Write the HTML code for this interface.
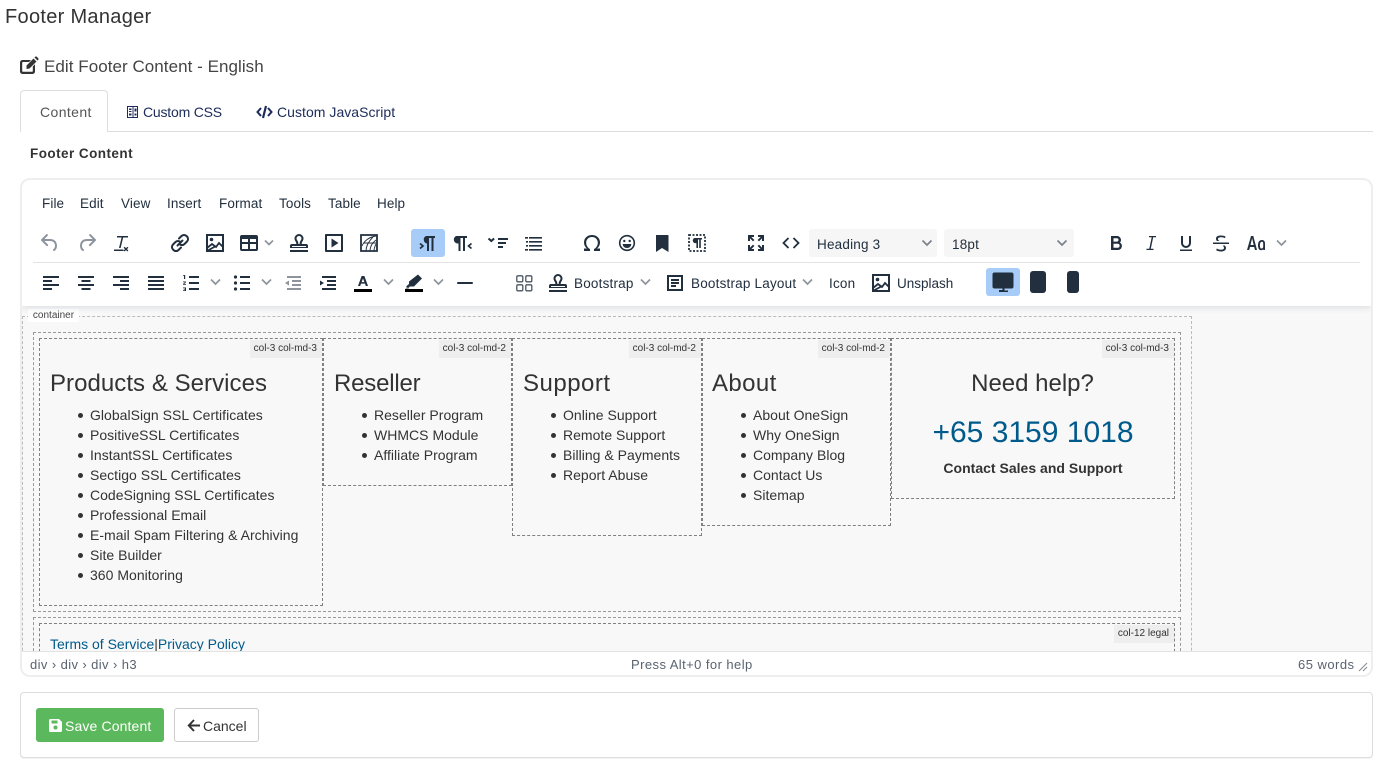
<!DOCTYPE html>
<html><head><meta charset="utf-8"><style>
html,body{margin:0;padding:0;background:#fff}
body{width:1388px;height:778px;position:relative;overflow:hidden;font-family:"Liberation Sans",sans-serif;color:#333}
.t{position:absolute;white-space:nowrap;line-height:20px}
.m{font-size:13.5px;color:#222f3e;letter-spacing:.1px}
.g{font-size:13.5px;color:#222f3e;letter-spacing:.2px}
svg{position:absolute;overflow:visible}
.i{fill:#222f3e}
.off{fill:#8d949d}
.box{position:absolute;box-sizing:border-box;border:1px dashed #999}
.c{border-color:#808080}
.lb{position:absolute;top:1px;right:0;height:18px;line-height:18px;background:#eee;font-size:10px;padding:0 5px 0 4px;color:#333;white-space:nowrap}
.h{position:absolute;font-size:24px;line-height:28px;color:#333;white-space:nowrap}
ul{position:absolute;margin:0;padding:0;list-style:none;font-size:14px;line-height:20px;color:#333;white-space:nowrap;letter-spacing:.02px}
li{position:relative;padding-left:0}
li:before{content:"";position:absolute;left:-12px;top:8px;width:5px;height:5px;border-radius:50%;background:#333}
</style></head><body>

<div class="t" style="left:5px;top:7px;font-size:20px;color:#333;letter-spacing:.3px">Footer Manager</div>

<svg style="left:20px;top:56px" width="20" height="18" viewBox="0 0 20 18"><path fill="#333" d="M2.500 4H11L9 6H3a.8.8 0 0 0-.8.8V15a.8.8 0 0 0 .8.8h9a.8.8 0 0 0 .8-.8V10.500l2.200-2.200V15.500a2.500 2.500 0 0 1-2.500 2.500h-10A2.500 2.500 0 0 1 0 15.500v-9A2.500 2.500 0 0 1 2.500 4z"/><path fill="#333" d="M6.500 9.500 13.500 2.500l3 3L9.500 12.500l-3 .5zM14.500 1.500l1-1h1l2 2v1l-1 1z"/></svg>
<div class="t" style="left:44px;top:57px;font-size:17px;color:#444;letter-spacing:.05px">Edit Footer Content - English</div>

<div style="position:absolute;left:20px;top:131px;width:1353px;height:1px;background:#ddd"></div>
<div style="position:absolute;left:20px;top:90px;width:88px;height:42px;box-sizing:border-box;border:1px solid #ddd;border-bottom:0;border-radius:4px 4px 0 0;background:#fff"></div>
<div class="t" style="left:40px;top:102px;font-size:14px;color:#555;letter-spacing:.4px">Content</div>
<svg style="left:127px;top:106px" width="12" height="12" viewBox="0 0 12 12"><rect x=".5" y=".5" width="10" height="11" fill="none" stroke="#1c2b5a"/><rect x="5.500" y="0" width="1" height="12" fill="#1c2b5a"/><rect x="2" y="2.500" width="2.500" height="1.500" fill="#1c2b5a"/><rect x="2" y="5" width="2.500" height="1" fill="#1c2b5a"/><rect x="7.500" y="2.500" width="2" height="3" fill="#1c2b5a"/><rect x="2" y="7.500" width="2.500" height="2" fill="#1c2b5a"/><rect x="7.500" y="7.500" width="2" height="2" fill="#1c2b5a"/></svg>
<div class="t" style="left:143px;top:102px;font-size:14px;color:#1c2b5a;letter-spacing:-.2px">Custom CSS</div>
<svg style="left:256px;top:105px" width="17" height="14" viewBox="0 0 17 14"><path fill="none" stroke="#1c2b5a" stroke-width="2" d="M5 3 1.500 7 5 11M12 3l3.500 4L12 11"/><path fill="none" stroke="#1c2b5a" stroke-width="2.200" d="M10 1 7 13"/></svg>
<div class="t" style="left:277px;top:102px;font-size:14px;color:#1c2b5a;letter-spacing:.04px">Custom JavaScript</div>

<div class="t" style="left:30px;top:144px;font-size:13.5px;font-weight:700;color:#333;letter-spacing:.45px">Footer Content</div>

<!-- editor -->
<div style="position:absolute;left:20px;top:178px;width:1353px;height:499px;box-sizing:border-box;border:2px solid #eee;border-radius:10px;background:#fff;overflow:hidden">
  <div style="position:absolute;left:0;top:126px;width:1349px;height:345px;background:#f8f8f8;overflow:hidden">
    <div class="box" style="left:0;top:10px;width:1170px;height:400px;border-color:#bbb"></div>
    <div style="position:absolute;left:6px;top:3px;width:51px;height:13px;background:#fff;font-size:10px;line-height:13px;text-align:center;color:#444">container</div>

    <div class="box" style="left:11px;top:26px;width:1148px;height:280px"></div>

    <div class="box c" style="left:17px;top:32px;width:284px;height:268px"><div class="lb">col-3 col-md-3</div>
      <div class="h" style="left:10px;top:31px;letter-spacing:.05px">Products &amp; Services</div>
      <ul style="left:50px;top:66px"><li>GlobalSign SSL Certificates</li><li>PositiveSSL Certificates</li><li>InstantSSL Certificates</li><li>Sectigo SSL Certificates</li><li>CodeSigning SSL Certificates</li><li>Professional Email</li><li>E-mail Spam Filtering &amp; Archiving</li><li>Site Builder</li><li>360 Monitoring</li></ul>
    </div>
    <div class="box c" style="left:301px;top:32px;width:189px;height:148px"><div class="lb">col-3 col-md-2</div>
      <div class="h" style="left:10px;top:31px;letter-spacing:-.2px">Reseller</div>
      <ul style="left:50px;top:66px"><li>Reseller Program</li><li>WHMCS Module</li><li>Affiliate Program</li></ul>
    </div>
    <div class="box c" style="left:490px;top:32px;width:190px;height:198px"><div class="lb">col-3 col-md-2</div>
      <div class="h" style="left:10px;top:31px;letter-spacing:.5px">Support</div>
      <ul style="left:50px;top:66px"><li>Online Support</li><li>Remote Support</li><li>Billing &amp; Payments</li><li>Report Abuse</li></ul>
    </div>
    <div class="box c" style="left:680px;top:32px;width:189px;height:188px"><div class="lb">col-3 col-md-2</div>
      <div class="h" style="left:9px;top:31px;letter-spacing:.4px">About</div>
      <ul style="left:50px;top:66px"><li>About OneSign</li><li>Why OneSign</li><li>Company Blog</li><li>Contact Us</li><li>Sitemap</li></ul>
    </div>
    <div class="box c" style="left:869px;top:32px;width:284px;height:161px"><div class="lb">col-3 col-md-3</div>
      <div class="h" style="left:-1px;width:283px;text-align:center;top:31px">Need help?</div>
      <div style="position:absolute;left:0;width:282px;top:76px;text-align:center;font-size:30px;line-height:36px;color:#005a8c">+65 3159 1018</div>
      <div style="position:absolute;left:0;width:282px;top:119px;text-align:center;font-size:14px;line-height:20px;font-weight:700;color:#333;letter-spacing:.01px">Contact Sales and Support</div>
    </div>

    <div class="box" style="left:11px;top:311px;width:1148px;height:60px"></div>
    <div class="box c" style="left:17px;top:317px;width:1136px;height:60px"><div class="lb">col-12 legal</div>
      <div style="position:absolute;left:10px;top:10px;font-size:14px;line-height:20px;white-space:nowrap;color:#005a8c">Terms of Service<span style="color:#333">|</span>Privacy Policy</div>
    </div>
  </div>
  <div style="position:absolute;left:0;top:0;width:1349px;height:126px;background:#fff;box-shadow:0 2px 6px rgba(34,47,62,.12)"></div>
  <div style="position:absolute;left:11px;top:82px;width:1327px;height:1px;background:#e3e3e3"></div>
  <div style="position:absolute;left:0;top:471px;width:1349px;height:24px;background:#fff;border-top:1px solid #e3e3e3;box-sizing:border-box"></div>
</div>

<!-- menu -->
<div class="t m" style="left:42px;top:194px">File</div>
<div class="t m" style="left:80px;top:194px">Edit</div>
<div class="t m" style="left:121px;top:194px">View</div>
<div class="t m" style="left:167px;top:194px">Insert</div>
<div class="t m" style="left:219px;top:194px">Format</div>
<div class="t m" style="left:279px;top:194px">Tools</div>
<div class="t m" style="left:328px;top:194px">Table</div>
<div class="t m" style="left:377px;top:194px">Help</div>

<!-- highlights -->
<div style="position:absolute;left:411px;top:229px;width:34px;height:28px;background:#a6ccf7;border-radius:3px"></div>
<div style="position:absolute;left:986px;top:268px;width:34px;height:28px;background:#a6ccf7;border-radius:3px"></div>
<div style="position:absolute;left:809px;top:229px;width:128px;height:28px;background:#f6f6f6;border-radius:3px"></div>
<div style="position:absolute;left:944px;top:229px;width:130px;height:28px;background:#f6f6f6;border-radius:3px"></div>
<div class="t g" style="left:817px;top:235px">Heading 3</div>
<div class="t g" style="left:952px;top:235px">18pt</div>

<!-- row 1 icons: each svg 24x24 -->
<svg style="left:38px;top:231px" width="24" height="24" viewBox="0 0 24 24"><path class="off" d="M6.400 8H12c3.700 0 6.200 2 6.800 5.100.6 2.700-.4 5.600-2.300 6.800a1 1 0 0 1-1-1.800c1.100-.6 1.800-2.700 1.400-4.600-.5-2.100-2.100-3.500-4.900-3.500H6.400l3.300 3.300a1 1 0 1 1-1.400 1.400l-5-5a1 1 0 0 1 0-1.400l5-5a1 1 0 0 1 1.400 1.400L6.400 8z"/></svg>
<svg style="left:75px;top:231px" width="24" height="24" viewBox="0 0 24 24"><path class="off" d="M17.600 8H12c-3.700 0-6.200 2-6.800 5.100-.6 2.700.4 5.600 2.300 6.800a1 1 0 0 0 1-1.800c-1.100-.6-1.800-2.700-1.400-4.600.5-2.100 2.100-3.500 4.900-3.500h5.600l-3.300 3.300a1 1 0 1 0 1.400 1.400l5-5a1 1 0 0 0 0-1.400l-5-5a1 1 0 0 0-1.400 1.400L17.600 8z"/></svg>
<svg style="left:109px;top:231px" width="24" height="24" viewBox="0 0 24 24"><path class="i" d="M8 5h11v1.500h-4.800L11.600 17H10L12.600 6.500H8zM5 18.500h9.500v1.500H5zM15.600 15.700l1.400 1.400 1.400-1.400 1 1-1.400 1.400 1.400 1.400-1 1-1.400-1.400-1.400 1.400-1-1 1.400-1.400-1.400-1.400z"/></svg>
<svg style="left:168px;top:231px" width="24" height="24" viewBox="0 0 24 24"><path fill="none" stroke="#222f3e" stroke-width="2" stroke-linecap="round" d="M11 7.500 13.500 5a3.500 3.500 0 0 1 5 0l.5.500a3.500 3.500 0 0 1 0 5L16.500 13a3.500 3.500 0 0 1-5 0M13 16.500 10.500 19a3.500 3.500 0 0 1-5 0L5 18.500a3.500 3.500 0 0 1 0-5L7.500 11a3.500 3.500 0 0 1 5 0M9.500 14.500l5-5"/></svg>
<svg style="left:203px;top:231px" width="24" height="24" viewBox="0 0 24 24"><rect x="4" y="4" width="16" height="16" fill="none" stroke="#222f3e" stroke-width="2"/><circle cx="8.500" cy="8.500" r="1.800" class="i"/><path fill="none" stroke="#222f3e" stroke-width="1.800" d="M4 17l5-4 4 3 3-4 4 4M4 20l9-5"/></svg>
<svg style="left:237px;top:231px" width="24" height="24" viewBox="0 0 24 24"><path class="i" fill-rule="evenodd" d="M5 4h14a2 2 0 0 1 2 2v12a2 2 0 0 1-2 2H5a2 2 0 0 1-2-2V6a2 2 0 0 1 2-2zm0 9v5h6v-5zm8 0v5h6v-5zm0-2h6V8h-6zm-8 0h6V8H5z"/></svg>
<svg style="left:264px;top:239px" width="10" height="8" viewBox="0 0 10 8"><path d="M1 1.500 5 5.500 9 1.500" fill="none" stroke="#8d949d" stroke-width="1.700"/></svg>
<svg style="left:287px;top:231px" width="24" height="24" viewBox="0 0 24 24"><path fill-rule="evenodd" class="i" d="M12 3a4.500 4.500 0 0 1 4.500 4.500c0 1.700-1 2.700-1.500 3.700-.3.600-.4 1.200-.3 1.800H19a2 2 0 0 1 2 2v2H3v-2a2 2 0 0 1 2-2h4.300c.1-.6 0-1.200-.3-1.800-.5-1-1.500-2-1.500-3.700A4.500 4.500 0 0 1 12 3zm0 2a2.500 2.500 0 0 0-2.500 2.500c0 1.100.8 1.800 1.300 2.800.4.800.6 1.700.5 2.700h1.400c-.1-1 .1-1.900.5-2.700.5-1 1.300-1.700 1.300-2.800A2.500 2.500 0 0 0 12 5zM3 19h18v2H3z"/><rect x="5" y="15" width="14" height="1" fill="#fff"/></svg>
<svg style="left:322px;top:231px" width="24" height="24" viewBox="0 0 24 24"><path class="i" fill-rule="evenodd" d="M4 3h16a1 1 0 0 1 1 1v16a1 1 0 0 1-1 1H4a1 1 0 0 1-1-1V4a1 1 0 0 1 1-1zm1 2v14h14V5zm4.500 2.500 7 4.500-7 4.500z"/></svg>
<svg style="left:357px;top:231px" width="24" height="24" viewBox="0 0 24 24"><path fill="none" stroke="#222f3e" stroke-width="1.800" d="M4 4h16v16H4z"/><path fill="none" stroke="#222f3e" stroke-width=".9" d="M5 15c2-5 7-9 14-10M9 20c0-5 3-10 7-14M13 20c0-4 2-8 6-11M17 20c0-3 1-5 2-7M7 12h12"/></svg>
<svg style="left:416px;top:231px" width="24" height="24" viewBox="0 0 24 24"><path class="i" d="M10 5h9v2h-1.500v13h-2V7H13v13h-2v-7.500a4 4 0 0 1-1-7.500z"/><path d="M4 12.500l3 2.500-3 2.500" fill="none" stroke="#222f3e" stroke-width="1.700"/></svg>
<svg style="left:451px;top:231px" width="24" height="24" viewBox="0 0 24 24"><path class="i" d="M5 5h11v2h-2v13h-2V7H9.500v13h-2v-7.500A4 4 0 0 1 5 5z"/><path d="M20.500 12.500l-3 2.500 3 2.500" fill="none" stroke="#222f3e" stroke-width="1.700"/></svg>
<svg style="left:486px;top:231px" width="24" height="24" viewBox="0 0 24 24"><path class="i" d="M12 7h10v2H12zM12 11h8v2h-8zM12 15h5v2h-5z"/><path d="M2.500 7.500l2.800 2.500 2.800-2.500" fill="none" stroke="#222f3e" stroke-width="2"/></svg>
<svg style="left:521px;top:231px" width="24" height="24" viewBox="0 0 24 24"><path class="i" d="M8 6h13v1.600H8zM8 10h13v1.600H8zM8 14h13v1.600H8zM8 18h13v1.600H8zM4 6h3v1.600H4zM5 10h2v1.600H5zM5 14h2v1.600H5zM4 18h3v1.600H4z"/></svg>
<svg style="left:580px;top:231px" width="24" height="24" viewBox="0 0 24 24"><path class="i" d="M12 4c4.500 0 8 3 8 7.500 0 2.500-1.200 4.600-3 6h3V20h-6v-2c2-1 3.800-3.300 3.800-6.300C17.800 8.400 15.300 6 12 6s-5.800 2.400-5.800 5.700c0 3 1.800 5.300 3.800 6.300v2H4v-2.500h3c-1.800-1.400-3-3.500-3-6C4 7 7.500 4 12 4z"/></svg>
<svg style="left:615px;top:231px" width="24" height="24" viewBox="0 0 24 24"><circle cx="12" cy="12" r="7.300" fill="none" stroke="#222f3e" stroke-width="1.600"/><circle cx="9.300" cy="10" r="1.200" class="i"/><circle cx="14.700" cy="10" r="1.200" class="i"/><path class="i" d="M7.700 13h8.600c0 2.400-1.900 4-4.300 4s-4.300-1.600-4.300-4z"/></svg>
<svg style="left:650px;top:231px" width="24" height="24" viewBox="0 0 24 24"><path class="i" d="M6 4h12a.5.500 0 0 1 .5.500V21L12 17l-6 4V4z"/></svg>
<svg style="left:685px;top:231px" width="24" height="24" viewBox="0 0 24 24"><path class="i" d="M9.500 7H17v1.500h-1.200V17h-1.600V8.500H13V17h-1.600v-5a2.600 2.600 0 0 1-1.900-5z"/><rect x="4" y="4" width="16" height="16" fill="none" stroke="#222f3e" stroke-width="1.800" stroke-dasharray="2 1.500"/></svg>
<svg style="left:744px;top:231px" width="24" height="24" viewBox="0 0 24 24"><path class="i" d="M4 4h6v2H7.400l3 3L9 10.400l-3-3V10H4zM14 4h6v6h-2V7.400l-3 3L13.600 9l3-3H14zM9 13.600l1.400 1.400-3 3H10v2H4v-6h2v2.600zM15 13.600l3 3V14h2v6h-6v-2h2.600l-3-3z"/></svg>
<svg style="left:779px;top:231px" width="24" height="24" viewBox="0 0 24 24"><path fill="none" stroke="#222f3e" stroke-width="1.800" d="M9.500 7 4.500 12l5 5M14.500 7l5 5-5 5"/></svg>
<svg style="left:921px;top:239px" width="12" height="8" viewBox="0 0 12 8"><path d="M1.500 1.500 6 6l4.500-4.500" fill="none" stroke="#7a828c" stroke-width="1.700"/></svg>
<svg style="left:1056px;top:239px" width="12" height="8" viewBox="0 0 12 8"><path d="M1.500 1.500 6 6l4.500-4.500" fill="none" stroke="#7a828c" stroke-width="1.700"/></svg>
<svg style="left:1104px;top:231px" width="24" height="24" viewBox="0 0 24 24"><path fill-rule="evenodd" class="i" d="M7 5h6a4 4 0 0 1 3 6.600A4 4 0 0 1 14 19H7zm2.500 2.200v3.400h3.300a1.700 1.700 0 0 0 0-3.400zm0 5.600v4h4.100a2 2 0 0 0 0-4z"/></svg>
<svg style="left:1139px;top:231px" width="24" height="24" viewBox="0 0 24 24"><path class="i" d="M10 5h7v1.200h-2.800L11.800 17.800H14.500V19H7.500v-1.200h2.800L12.700 6.200H10z"/></svg>
<svg style="left:1174px;top:231px" width="24" height="24" viewBox="0 0 24 24"><path class="i" d="M7 5h2v7a3 3 0 0 0 6 0V5h2v7a5 5 0 0 1-10 0zM6 18.500h12V20H6z"/></svg>
<svg style="left:1209px;top:231px" width="24" height="24" viewBox="0 0 24 24"><path class="i" d="M4 11.500h16V13H4zM8 10c-.7-.7-1-1.500-1-2.500C7 5.500 9 4.500 12 4.500c1.800 0 3.500.4 4.500 1l-.5 1.700c-1-.6-2.500-.9-4-.9-1.800 0-3 .5-3 1.700 0 .9.600 1.500 1.400 2zM15.800 14.500c.8 1 1.200 1.500 1.200 2.500 0 2.300-2.200 3.500-5 3.500-1.900 0-3.700-.5-4.800-1.200l.6-1.800c1.100.7 2.700 1.200 4.200 1.200 1.800 0 3-.6 3-1.700 0-.9-.4-1.500-1.300-2.500z"/></svg>
<svg style="left:1244px;top:231px" width="24" height="24" viewBox="0 0 24 24"><path fill-rule="evenodd" class="i" d="M7 5h2.300L13 19h-2l-.8-3H6l-.8 3H3zm1.100 2.200L6.500 14h3.200zM18 9c1.800 0 3 1.300 3 3.500V19h-1.800v-.9c-.5.700-1.200 1.100-2.200 1.100-2 0-3-2-3-5s1.200-5.200 4-5.200zm.2 1.700c-1.500 0-2.300 1.300-2.300 3.500s.5 3.300 1.600 3.300c1 0 1.700-.7 1.700-2v-3c0-1.100-.3-1.800-1-1.800z"/></svg>
<svg style="left:1276px;top:239px" width="11" height="8" viewBox="0 0 11 8"><path d="M1 1.500 5.500 6 10 1.500" fill="none" stroke="#8d949d" stroke-width="1.700"/></svg>

<!-- row 2 icons -->
<svg style="left:39px;top:271px" width="24" height="24" viewBox="0 0 24 24"><path class="i" d="M4 5h16v2H4zM4 9h9v2H4zM4 13h16v2H4zM4 17h9v2H4z"/></svg>
<svg style="left:74px;top:271px" width="24" height="24" viewBox="0 0 24 24"><path class="i" d="M4 5h16v2H4zM7.500 9h9v2h-9zM4 13h16v2H4zM7.500 17h9v2h-9z"/></svg>
<svg style="left:109px;top:271px" width="24" height="24" viewBox="0 0 24 24"><path class="i" d="M4 5h16v2H4zM11 9h9v2h-9zM4 13h16v2H4zM11 17h9v2h-9z"/></svg>
<svg style="left:144px;top:271px" width="24" height="24" viewBox="0 0 24 24"><path class="i" d="M4 5h16v2H4zM4 9h16v2H4zM4 13h16v2H4zM4 17h16v2H4z"/></svg>
<svg style="left:179px;top:271px" width="24" height="24" viewBox="0 0 24 24"><path class="i" d="M10 5h10v2H10zM10 11h10v2H10zM10 17h10v2H10z"/><path class="i" d="M5 4h1.200v4H5V5H4V4.500zM4 10.500h3v.8L5.200 13H7v.8H4V13l1.900-1.700H4zM4 16.500h3v3.500H4v-.8h2v-.6H4.700v-.7H6v-.6H4z"/></svg>
<svg style="left:210px;top:278px" width="11" height="8" viewBox="0 0 11 8"><path d="M1 1.500 5.500 6 10 1.500" fill="none" stroke="#8d949d" stroke-width="1.700"/></svg>
<svg style="left:230px;top:271px" width="24" height="24" viewBox="0 0 24 24"><path class="i" d="M10 5h10v2H10zM10 11h10v2H10zM10 17h10v2H10z"/><circle cx="5.500" cy="6" r="1.600" class="i"/><circle cx="5.500" cy="12" r="1.600" class="i"/><circle cx="5.500" cy="18" r="1.600" class="i"/></svg>
<svg style="left:261px;top:278px" width="11" height="8" viewBox="0 0 11 8"><path d="M1 1.500 5.500 6 10 1.500" fill="none" stroke="#8d949d" stroke-width="1.700"/></svg>
<svg style="left:281px;top:271px" width="24" height="24" viewBox="0 0 24 24"><path class="off" d="M6 5h14v2H6zM11 9h9v2h-9zM11 13h9v2h-9zM6 17h14v2H6zM8 9.500v5L4 12z"/></svg>
<svg style="left:316px;top:271px" width="24" height="24" viewBox="0 0 24 24"><path class="i" d="M6 5h14v2H6zM11 9h9v2h-9zM11 13h9v2h-9zM6 17h14v2H6zM4 9.500v5L8 12z"/></svg>
<svg style="left:351px;top:271px" width="24" height="24" viewBox="0 0 24 24"><path class="i" fill-rule="evenodd" d="M10.600 5h2.800l3.600 10h-2.200l-.8-2.400h-4l-.8 2.400H7zm1.400 2.500-1.400 3.600h2.800z"/><rect x="3" y="18" width="18" height="3" fill="#000"/></svg>
<svg style="left:383px;top:278px" width="11" height="8" viewBox="0 0 11 8"><path d="M1 1.500 5.500 6 10 1.500" fill="none" stroke="#8d949d" stroke-width="1.700"/></svg>
<svg style="left:402px;top:271px" width="24" height="24" viewBox="0 0 24 24"><path class="i" d="M16 3.500 20 7.500 12 15.500H8L6 16.500 4 15.500 7 13V10.500zM4.500 16.500h3l-1 1h-3z"/><rect x="3" y="18" width="18" height="3" fill="#000"/></svg>
<svg style="left:433px;top:278px" width="11" height="8" viewBox="0 0 11 8"><path d="M1 1.500 5.500 6 10 1.500" fill="none" stroke="#8d949d" stroke-width="1.700"/></svg>
<svg style="left:453px;top:271px" width="24" height="24" viewBox="0 0 24 24"><rect x="4" y="11" width="16" height="2" rx="1" class="i"/></svg>
<svg style="left:512px;top:271px" width="24" height="24" viewBox="0 0 24 24"><rect x="4.800" y="4.800" width="6" height="6" rx="1.200" fill="none" stroke="#4a5563" stroke-width="1.300"/><rect x="13.800" y="4.800" width="6" height="6" rx="1.200" fill="none" stroke="#4a5563" stroke-width="1.300"/><rect x="4.800" y="13.800" width="6" height="6" rx="1.200" fill="none" stroke="#4a5563" stroke-width="1.300"/><rect x="13.800" y="13.800" width="6" height="6" rx="1.200" fill="none" stroke="#4a5563" stroke-width="1.300"/></svg>
<svg style="left:546px;top:271px" width="24" height="24" viewBox="0 0 24 24"><path fill-rule="evenodd" class="i" d="M12 3a4.500 4.500 0 0 1 4.500 4.500c0 1.700-1 2.700-1.500 3.700-.3.600-.4 1.200-.3 1.800H19a2 2 0 0 1 2 2v2H3v-2a2 2 0 0 1 2-2h4.300c.1-.6 0-1.200-.3-1.800-.5-1-1.500-2-1.500-3.700A4.500 4.500 0 0 1 12 3zm0 2a2.500 2.500 0 0 0-2.500 2.500c0 1.100.8 1.800 1.300 2.800.4.800.6 1.700.5 2.700h1.400c-.1-1 .1-1.900.5-2.700.5-1 1.300-1.700 1.300-2.800A2.500 2.500 0 0 0 12 5zM3 19h18v2H3z"/><rect x="5" y="15" width="14" height="1" fill="#fff"/></svg>
<div class="t g" style="left:574px;top:274px">Bootstrap</div>
<svg style="left:640px;top:278px" width="11" height="8" viewBox="0 0 11 8"><path d="M1 1.500 5.500 6 10 1.500" fill="none" stroke="#8d949d" stroke-width="1.700"/></svg>
<svg style="left:663px;top:271px" width="24" height="24" viewBox="0 0 24 24"><path class="i" fill-rule="evenodd" d="M4 4h16v16H4zm2 2v12h12V6zm2 2h8v2H8zm0 3h8v2H8zm0 3h5v2H8z"/></svg>
<div class="t g" style="left:691px;top:274px">Bootstrap Layout</div>
<svg style="left:802px;top:278px" width="11" height="8" viewBox="0 0 11 8"><path d="M1 1.500 5.500 6 10 1.500" fill="none" stroke="#8d949d" stroke-width="1.700"/></svg>
<div class="t g" style="left:829px;top:274px">Icon</div>
<svg style="left:869px;top:271px" width="24" height="24" viewBox="0 0 24 24"><rect x="4" y="4" width="16" height="16" fill="none" stroke="#222f3e" stroke-width="2"/><circle cx="8.500" cy="8.500" r="1.800" class="i"/><path fill="none" stroke="#222f3e" stroke-width="1.800" d="M4 17l5-4 4 3 3-4 4 4M4 20l9-5"/></svg>
<div class="t g" style="left:897px;top:274px;letter-spacing:0">Unsplash</div>
<svg style="left:991px;top:270px" width="24" height="24" viewBox="0 0 24 24"><path class="i" d="M3.500 2.500h17a2 2 0 0 1 2 2v12a2 2 0 0 1-2 2h-7v2H17v1.500H8V20h3.500v-1.500h-8a2 2 0 0 1-2-2v-12a2 2 0 0 1 2-2z"/></svg>
<div style="position:absolute;left:1030px;top:271px;width:16px;height:22px;background:#222f3e;border-radius:3px"></div>
<div style="position:absolute;left:1067px;top:271px;width:12px;height:22px;background:#222f3e;border-radius:3px"></div>

<!-- status bar -->
<div class="t" style="left:30px;top:655px;font-size:13px;color:#596370;letter-spacing:.4px">div › div › div › h3</div>
<div class="t" style="left:631px;top:655px;font-size:13px;color:#596370;letter-spacing:.43px">Press Alt+0 for help</div>
<div class="t" style="left:1298px;top:655px;font-size:13px;color:#596370;letter-spacing:.47px">65 words</div>
<svg style="left:1358px;top:662px" width="10" height="10" viewBox="0 0 10 10"><path d="M9 1 1 9M9 5 5 9" stroke="#8a9099" stroke-width="1.100" fill="none"/></svg>

<!-- bottom panel -->
<div style="position:absolute;left:20px;top:692px;width:1353px;height:66px;box-sizing:border-box;border:1px solid #ddd;border-radius:4px;background:#fff;box-shadow:0 1px 1px rgba(0,0,0,.05)"></div>
<div style="position:absolute;left:36px;top:708px;width:128px;height:34px;background:#5cb85c;border-radius:3px"></div>
<svg style="left:49px;top:719px" width="13" height="13" viewBox="0 0 13 13"><path fill="#fff" fill-rule="evenodd" d="M1.500 0H10l3 3v8.500a1.500 1.500 0 0 1-1.500 1.500h-10A1.500 1.500 0 0 1 0 11.500v-10A1.500 1.500 0 0 1 1.500 0zM2.500 1.500v3h6v-3zM6.500 6.500a2 2 0 1 0 0 4 2 2 0 0 0 0-4z"/></svg>
<div class="t" style="left:65px;top:716px;font-size:14px;color:#fff;letter-spacing:.13px">Save Content</div>
<div style="position:absolute;left:174px;top:708px;width:85px;height:34px;box-sizing:border-box;background:#fff;border:1px solid #ccc;border-radius:3px"></div>
<svg style="left:187px;top:719px" width="13" height="13" viewBox="0 0 13 13"><path fill="none" stroke="#333" stroke-width="2" d="M7 1 1.800 6.500 7 12M2 6.500h11"/></svg>
<div class="t" style="left:203px;top:716px;font-size:14px;color:#333;letter-spacing:0">Cancel</div>

</body></html>
